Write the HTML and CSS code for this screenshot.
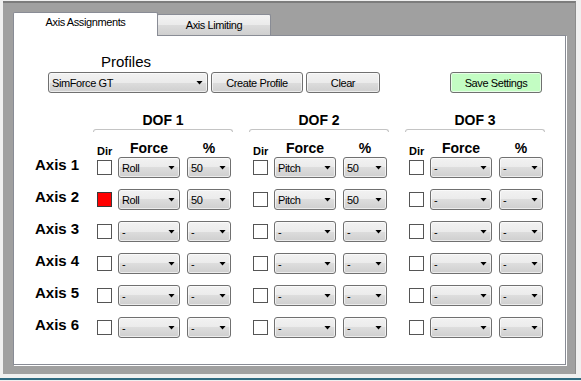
FILE: index.html
```html
<!DOCTYPE html>
<html lang="en">
<head>
    <meta charset="UTF-8">
    <title>Axis Assignments</title>
    <link rel="stylesheet" href="styles.css">
</head>
<body>
    <div class="window">
        <div class="tabs">
            <div class="tab active">Axis Assignments</div>
            <div class="tab">Axis Limiting</div>
        </div>

        <div class="panel">
            <div class="profiles-label">Profiles</div>
            <div class="profile-row">
                <div class="combo profile-combo"><span>SimForce GT</span></div>
                <div class="btn create-btn">Create Profile</div>
                <div class="btn clear-btn">Clear</div>
                <div class="btn save-btn">Save Settings</div>
            </div>

            <!-- DOF group titles -->
            <div class="dof-titles">
                <div class="dof-title">DOF 1</div>
                <div class="dof-title">DOF 2</div>
                <div class="dof-title">DOF 3</div>
            </div>

            <div class="grid-row head-row">
                <div class="axis-label"></div>
                <div class="group">
                    <div class="col-dir">Dir</div>
                    <div class="col-force">Force</div>
                    <div class="col-pct">%</div>
                </div>
                <div class="group">
                    <div class="col-dir">Dir</div>
                    <div class="col-force">Force</div>
                    <div class="col-pct">%</div>
                </div>
                <div class="group">
                    <div class="col-dir">Dir</div>
                    <div class="col-force">Force</div>
                    <div class="col-pct">%</div>
                </div>
            </div>

            <div class="grid-row">
                <div class="axis-label">Axis 1</div>
                <div class="group">
                    <div class="check"></div>
                    <div class="combo force"><span>Roll</span></div>
                    <div class="combo pct"><span>50</span></div>
                </div>
                <div class="group">
                    <div class="check"></div>
                    <div class="combo force"><span>Pitch</span></div>
                    <div class="combo pct"><span>50</span></div>
                </div>
                <div class="group">
                    <div class="check"></div>
                    <div class="combo force"><span>-</span></div>
                    <div class="combo pct"><span>-</span></div>
                </div>
            </div>

            <div class="grid-row">
                <div class="axis-label">Axis 2</div>
                <div class="group">
                    <div class="check checked"></div>
                    <div class="combo force"><span>Roll</span></div>
                    <div class="combo pct"><span>50</span></div>
                </div>
                <div class="group">
                    <div class="check"></div>
                    <div class="combo force"><span>Pitch</span></div>
                    <div class="combo pct"><span>50</span></div>
                </div>
                <div class="group">
                    <div class="check"></div>
                    <div class="combo force"><span>-</span></div>
                    <div class="combo pct"><span>-</span></div>
                </div>
            </div>

            <div class="grid-row">
                <div class="axis-label">Axis 3</div>
                <div class="group">
                    <div class="check"></div>
                    <div class="combo force"><span>-</span></div>
                    <div class="combo pct"><span>-</span></div>
                </div>
                <div class="group">
                    <div class="check"></div>
                    <div class="combo force"><span>-</span></div>
                    <div class="combo pct"><span>-</span></div>
                </div>
                <div class="group">
                    <div class="check"></div>
                    <div class="combo force"><span>-</span></div>
                    <div class="combo pct"><span>-</span></div>
                </div>
            </div>

            <div class="grid-row">
                <div class="axis-label">Axis 4</div>
                <div class="group">
                    <div class="check"></div>
                    <div class="combo force"><span>-</span></div>
                    <div class="combo pct"><span>-</span></div>
                </div>
                <div class="group">
                    <div class="check"></div>
                    <div class="combo force"><span>-</span></div>
                    <div class="combo pct"><span>-</span></div>
                </div>
                <div class="group">
                    <div class="check"></div>
                    <div class="combo force"><span>-</span></div>
                    <div class="combo pct"><span>-</span></div>
                </div>
            </div>

            <div class="grid-row">
                <div class="axis-label">Axis 5</div>
                <div class="group">
                    <div class="check"></div>
                    <div class="combo force"><span>-</span></div>
                    <div class="combo pct"><span>-</span></div>
                </div>
                <div class="group">
                    <div class="check"></div>
                    <div class="combo force"><span>-</span></div>
                    <div class="combo pct"><span>-</span></div>
                </div>
                <div class="group">
                    <div class="check"></div>
                    <div class="combo force"><span>-</span></div>
                    <div class="combo pct"><span>-</span></div>
                </div>
            </div>

            <div class="grid-row">
                <div class="axis-label">Axis 6</div>
                <div class="group">
                    <div class="check"></div>
                    <div class="combo force"><span>-</span></div>
                    <div class="combo pct"><span>-</span></div>
                </div>
                <div class="group">
                    <div class="check"></div>
                    <div class="combo force"><span>-</span></div>
                    <div class="combo pct"><span>-</span></div>
                </div>
                <div class="group">
                    <div class="check"></div>
                    <div class="combo force"><span>-</span></div>
                    <div class="combo pct"><span>-</span></div>
                </div>
            </div>
        </div>
    </div>
    <div class="taskbar-edge"></div>
</body>
</html>
```

FILE: styles.css
```css
/* General reset */
* {
    box-sizing: border-box;
    margin: 0;
    padding: 0;
}

body {
    font-family: "Liberation Sans", Arial, sans-serif;
    background-color: #f0f0f0;
    width: 581px;
    height: 381px;
    overflow: hidden;
    color: #000;
}

/* Outer form area */
.window {
    margin: 1px 0 0 3px;
    width: 573px;
    height: 373px;
    padding: 9px 0 0 10px;
    background-color: #a0a0a0;
    border-top: 2px solid #7c7c7c;
    border-right: 1px solid #8c8c8c;
}

.taskbar-edge {
    margin-top: 4px;
    height: 2px;
    background-color: #2f6a80;
}

/* Tab strip */
.tabs {
    display: flex;
    align-items: flex-end;
    height: 23px;
}

.tab {
    font-size: 11px;
    line-height: 13px;
    letter-spacing: -0.4px;
    text-align: center;
    border: 1px solid #898c95;
    border-bottom: none;
    border-radius: 2px 2px 0 0;
}

.tab.active {
    position: relative;
    z-index: 1;
    width: 145px;
    height: 24px;
    margin-bottom: -1px;
    padding-top: 3px;
    background-color: #fff;
}

.tab:not(.active) {
    width: 114px;
    height: 21px;
    margin-left: -1px;
    padding-top: 4px;
    background: linear-gradient(#f3f3f3, #ebebeb 50%, #dcdcdc 50%, #cfcfcf);
}

/* Tab page */
.panel {
    width: 553px;
    height: 330px;
    background-color: #fff;
    border: 1px solid #898c95;
    box-shadow: 1px 1px 0 #fff;
}

.profiles-label {
    font-size: 15px;
    line-height: 17px;
    padding: 17px 0 0 87px;
}

.profile-row {
    display: flex;
    margin: 2px 0 0 34px;
}

/* Combo boxes and buttons */
.combo,
.btn {
    height: 21px;
    font-size: 11px;
    letter-spacing: -0.4px;
    border: 1px solid #707070;
    border-radius: 3px;
    background: linear-gradient(#f2f2f2, #ebebeb 50%, #dddddd 50%, #cfcfcf);
    box-shadow: inset 0 0 0 1px rgba(255, 255, 255, 0.6);
}

.combo {
    display: flex;
    align-items: center;
    padding: 0 4px 0 3px;
}

.combo::after {
    content: "";
    margin-left: auto;
    width: 7px;
    height: 4px;
    background-color: #000;
    clip-path: polygon(0 0, 100% 0, 50% 100%);
}

.btn {
    display: flex;
    align-items: center;
    justify-content: center;
}

.profile-combo {
    width: 160px;
}

.create-btn {
    width: 92px;
    margin-left: 3px;
}

.clear-btn {
    width: 74px;
    margin-left: 3px;
}

.save-btn {
    width: 92px;
    margin-left: 70px;
    background: #c3fdc3;
}

/* DOF titles */
.dof-titles {
    display: flex;
    margin: 19px 0 0 79px;
}

.dof-title {
    width: 140px;
    margin-right: 16px;
    font-size: 14px;
    font-weight: bold;
    line-height: 16px;
    text-align: center;
    padding-bottom: 1px;
}

.dof-title::after {
    content: "";
    display: block;
    height: 2px;
    margin-top: 1px;
    border: 1px solid #c4c4c4;
    border-bottom: none;
    border-radius: 3px 3px 0 0;
}

/* Axis grid */
.grid-row {
    display: flex;
    align-items: center;
    height: 21px;
    margin: 11px 0 0 21px;
}

.head-row {
    align-items: flex-start;
    height: 16px;
    margin-top: 7px;
    margin-bottom: -10px;
}

.axis-label {
    align-self: flex-start;
    width: 62px;
    font-size: 15px;
    font-weight: bold;
    line-height: 17px;
    margin-top: -1px;
}

.head-row .axis-label {
    margin-top: 0;
}

.group {
    display: flex;
    align-items: center;
    width: 156px;
}

.head-row .group {
    align-items: flex-start;
}

.col-dir {
    width: 15px;
    margin-top: 5px;
    font-size: 11px;
    font-weight: bold;
    line-height: 13px;
    text-align: center;
}

.col-force,
.col-pct {
    font-size: 14px;
    font-weight: bold;
    line-height: 16px;
    text-align: center;
}

.col-force {
    width: 62px;
    margin-left: 6px;
}

.col-pct {
    width: 44px;
    margin-left: 7px;
}

.check {
    width: 15px;
    height: 15px;
    border: 1px solid #555;
    background-color: #fff;
}

.check.checked {
    background-color: #ff0000;
    border-color: #3a3a3a;
}

.combo.force {
    width: 62px;
    margin-left: 6px;
}

.combo.pct {
    width: 44px;
    margin-left: 7px;
}
```
